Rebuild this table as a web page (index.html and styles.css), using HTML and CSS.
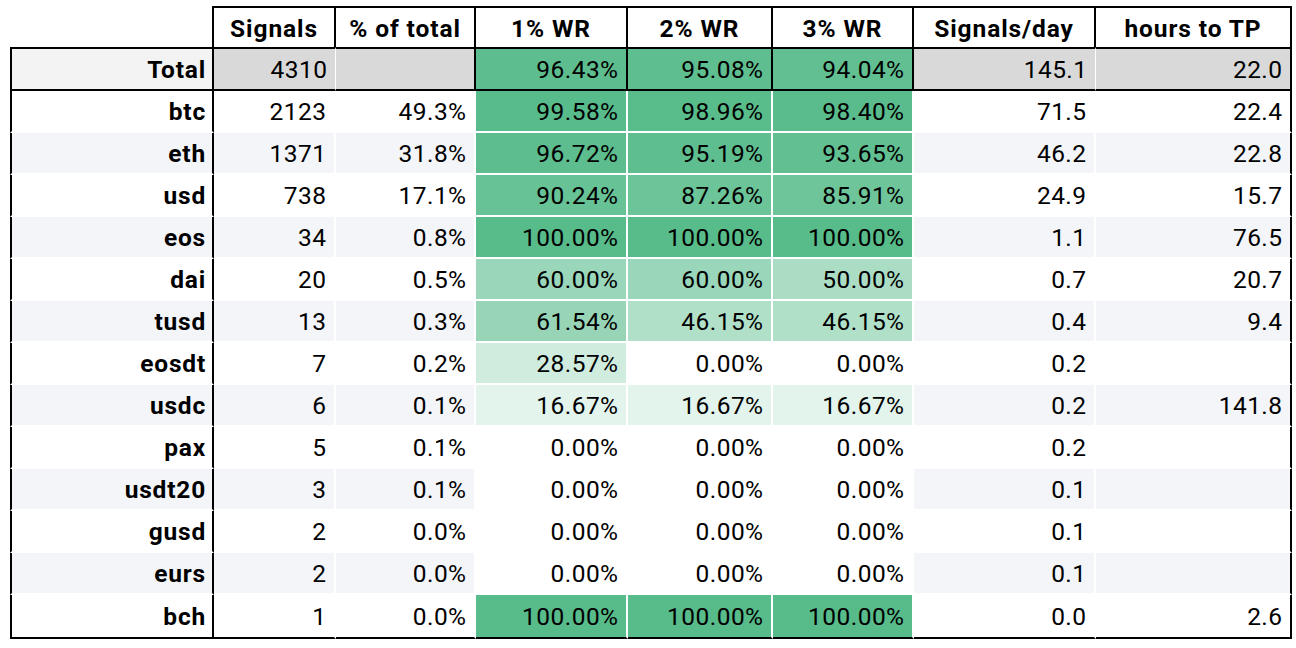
FILE: index.html
```html
<!DOCTYPE html>
<html>
<head>
<meta charset="utf-8">
<link rel="stylesheet" href="styles.css">
</head>
<body>
<div class="sheet">
  <div class="c corner"></div>
  <div class="c h">Signals</div>
  <div class="c h">% of total</div>
  <div class="c h">1% WR</div>
  <div class="c h">2% WR</div>
  <div class="c h">3% WR</div>
  <div class="c h">Signals/day</div>
  <div class="c h last">hours to TP</div>

  <div class="c t lab">Total</div>
  <div class="c t gray soft">4310</div>
  <div class="c t gray">&nbsp;</div>
  <div class="c t wr" style="background:rgb(93,189,142)">96.43%</div>
  <div class="c t wr" style="background:rgb(95,190,143)">95.08%</div>
  <div class="c t wr" style="background:rgb(97,191,145)">94.04%</div>
  <div class="c t gray soft">145.1</div>
  <div class="c t gray last">22.0</div>

  <div class="c lab">btc</div><div class="c">2123</div><div class="c">49.3%</div>
  <div class="c wr" style="background:rgb(88,187,139)">99.58%</div>
  <div class="c wr" style="background:rgb(89,188,139)">98.96%</div>
  <div class="c wr" style="background:rgb(90,188,140)">98.40%</div>
  <div class="c">71.5</div><div class="c last">22.4</div>

  <div class="c lab alt">eth</div><div class="c alt">1371</div><div class="c alt">31.8%</div>
  <div class="c wr" style="background:rgb(93,189,142)">96.72%</div>
  <div class="c wr" style="background:rgb(95,190,144)">95.19%</div>
  <div class="c wr" style="background:rgb(98,191,145)">93.65%</div>
  <div class="c alt">46.2</div><div class="c alt last">22.8</div>

  <div class="c lab">usd</div><div class="c">738</div><div class="c">17.1%</div>
  <div class="c wr" style="background:rgb(103,194,149)">90.24%</div>
  <div class="c wr" style="background:rgb(108,196,153)">87.26%</div>
  <div class="c wr" style="background:rgb(111,197,154)">85.91%</div>
  <div class="c">24.9</div><div class="c last">15.7</div>

  <div class="c lab alt">eos</div><div class="c alt">34</div><div class="c alt">0.8%</div>
  <div class="c wr" style="background:rgb(87,187,138)">100.00%</div>
  <div class="c wr" style="background:rgb(87,187,138)">100.00%</div>
  <div class="c wr" style="background:rgb(87,187,138)">100.00%</div>
  <div class="c alt">1.1</div><div class="c alt last">76.5</div>

  <div class="c lab">dai</div><div class="c">20</div><div class="c">0.5%</div>
  <div class="c wr" style="background:rgb(154,214,185)">60.00%</div>
  <div class="c wr" style="background:rgb(154,214,185)">60.00%</div>
  <div class="c wr" style="background:rgb(171,221,197)">50.00%</div>
  <div class="c">0.7</div><div class="c last">20.7</div>

  <div class="c lab alt">tusd</div><div class="c alt">13</div><div class="c alt">0.3%</div>
  <div class="c wr" style="background:rgb(152,213,183)">61.54%</div>
  <div class="c wr" style="background:rgb(177,224,201)">46.15%</div>
  <div class="c wr" style="background:rgb(177,224,201)">46.15%</div>
  <div class="c alt">0.4</div><div class="c alt last">9.4</div>

  <div class="c lab">eosdt</div><div class="c">7</div><div class="c">0.2%</div>
  <div class="c wr" style="background:rgb(207,236,222)">28.57%</div>
  <div class="c wr" style="background:rgb(255,255,255)">0.00%</div>
  <div class="c wr" style="background:rgb(255,255,255)">0.00%</div>
  <div class="c">0.2</div><div class="c last"></div>

  <div class="c lab alt">usdc</div><div class="c alt">6</div><div class="c alt">0.1%</div>
  <div class="c wr" style="background:rgb(227,244,236)">16.67%</div>
  <div class="c wr" style="background:rgb(227,244,236)">16.67%</div>
  <div class="c wr" style="background:rgb(227,244,236)">16.67%</div>
  <div class="c alt">0.2</div><div class="c alt last">141.8</div>

  <div class="c lab">pax</div><div class="c">5</div><div class="c">0.1%</div>
  <div class="c wr" style="background:rgb(255,255,255)">0.00%</div>
  <div class="c wr" style="background:rgb(255,255,255)">0.00%</div>
  <div class="c wr" style="background:rgb(255,255,255)">0.00%</div>
  <div class="c">0.2</div><div class="c last"></div>

  <div class="c lab alt">usdt20</div><div class="c alt">3</div><div class="c alt">0.1%</div>
  <div class="c wr" style="background:rgb(255,255,255)">0.00%</div>
  <div class="c wr" style="background:rgb(255,255,255)">0.00%</div>
  <div class="c wr" style="background:rgb(255,255,255)">0.00%</div>
  <div class="c alt">0.1</div><div class="c alt last"></div>

  <div class="c lab">gusd</div><div class="c">2</div><div class="c">0.0%</div>
  <div class="c wr" style="background:rgb(255,255,255)">0.00%</div>
  <div class="c wr" style="background:rgb(255,255,255)">0.00%</div>
  <div class="c wr" style="background:rgb(255,255,255)">0.00%</div>
  <div class="c">0.1</div><div class="c last"></div>

  <div class="c lab alt">eurs</div><div class="c alt">2</div><div class="c alt">0.0%</div>
  <div class="c wr" style="background:rgb(255,255,255)">0.00%</div>
  <div class="c wr" style="background:rgb(255,255,255)">0.00%</div>
  <div class="c wr" style="background:rgb(255,255,255)">0.00%</div>
  <div class="c alt">0.1</div><div class="c alt last"></div>

  <div class="c lab end">bch</div><div class="c end">1</div><div class="c end">0.0%</div>
  <div class="c wr end" style="background:rgb(87,187,138)">100.00%</div>
  <div class="c wr end" style="background:rgb(87,187,138)">100.00%</div>
  <div class="c wr end" style="background:rgb(87,187,138)">100.00%</div>
  <div class="c end">0.0</div><div class="c end last">2.6</div>
</div>
</body>
</html>
```
FILE: styles.css
```css
html, body {
  margin: 0;
  padding: 0;
  background: #fff;
}

body {
  font-family: Roboto, "Liberation Sans", Arial, sans-serif;
  color: #000;
}

.sheet {
  margin: 6px 0 0 10px;
  display: grid;
  grid-template-columns: 204px 122px 140px 152px 145px 141px 182px 196px;
  grid-template-rows: 41px 44px repeat(12, 42px) 44px;
  width: 1282px;
}

.c {
  box-sizing: border-box;
  display: flex;
  align-items: center;
  justify-content: flex-end;
  padding: 2px 7.5px 0 0;
  font-size: 24.5px;
  letter-spacing: 0.45px;
  line-height: 1;
  white-space: nowrap;
  border-right: 2px solid #fff;
  border-bottom: 2px solid #fff;
  background: #fff;
}

.c.last {
  border-right: 2px solid #000;
}

.corner {
  border-right: 2px solid #000;
  border-bottom: none;
}

.h {
  justify-content: center;
  padding: 3px 0 0 0;
  font-weight: 700;
  letter-spacing: 0.9px;
  border-top: 2px solid #000;
  border-right: 2px solid #000;
  border-bottom: none;
}

.t {
  border-top: 2px solid #000;
  border-bottom: 2px solid #000;
  border-right: 2px solid #000;
}

.t.soft {
  border-right: 1px solid #fff;
}

.gray {
  background: #d9d9d9;
}

.lab {
  font-weight: 700;
  letter-spacing: 0.8px;
  padding-right: 6px;
  border-left: 2px solid #000;
  border-right: 2px solid #000;
}

.t.lab {
  background: #f3f3f3;
}

.alt {
  background: #f3f5f9;
}

.end {
  border-bottom: 2px solid #000;
}
```
